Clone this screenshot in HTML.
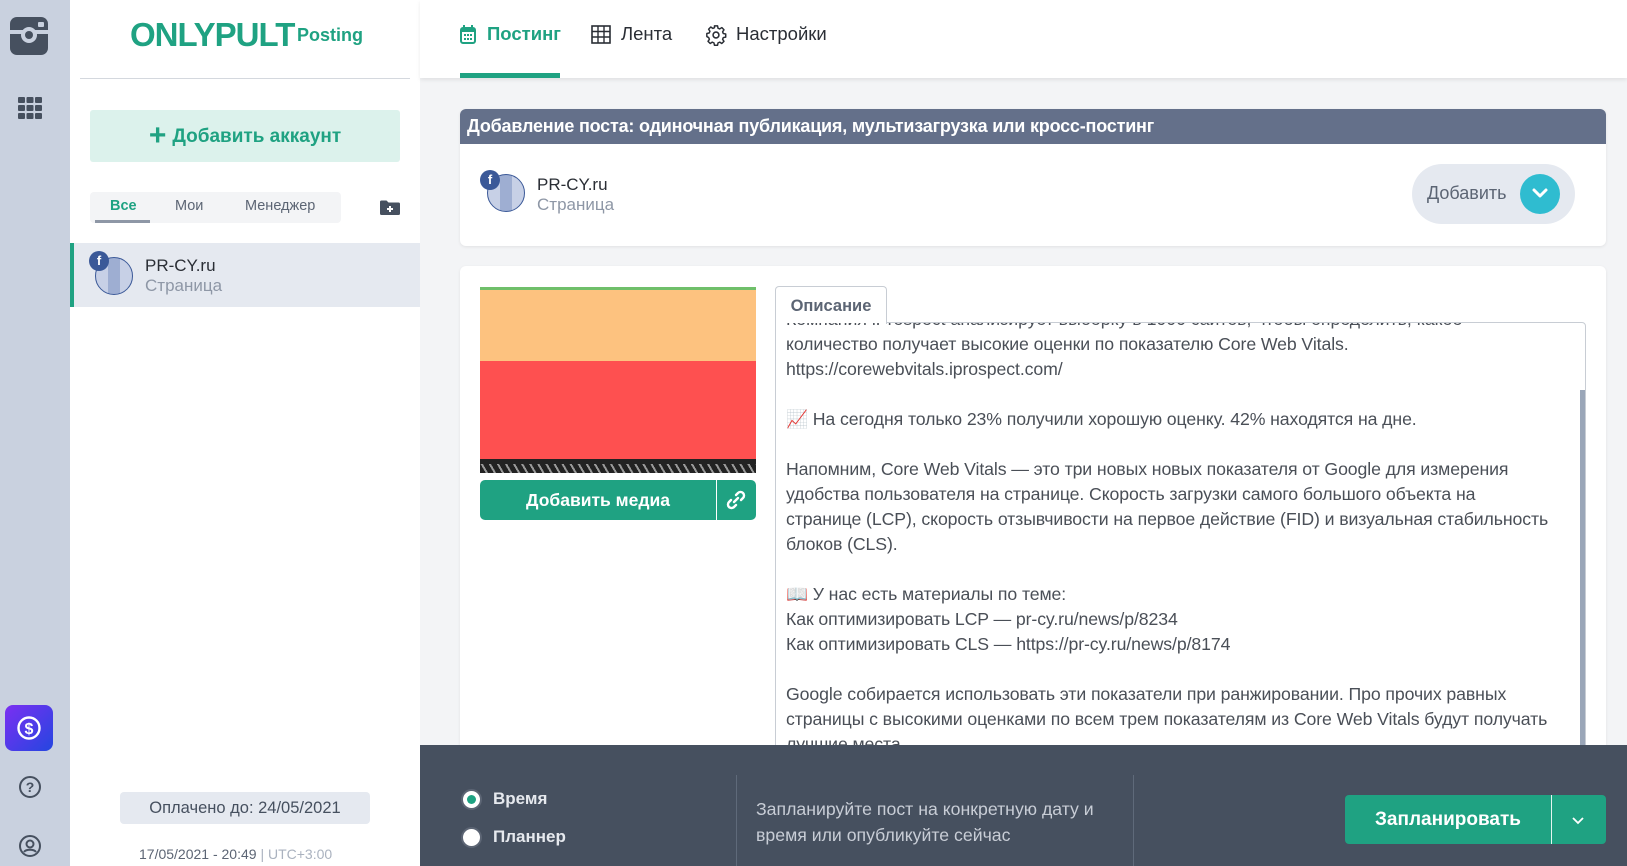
<!DOCTYPE html>
<html><head><meta charset="utf-8"><style>
*{box-sizing:border-box;margin:0;padding:0}
body{width:1627px;height:866px;overflow:hidden;font-family:"Liberation Sans",Arial,sans-serif;background:#f3f4f6;position:relative}
.abs{position:absolute}
.rail{left:0;top:0;width:70px;height:866px;background:#c9d1df}
.side{left:70px;top:0;width:350px;height:866px;background:#fff}
.nav{left:420px;top:0;width:1207px;height:78px;background:#fff;box-shadow:0 2px 4px rgba(0,0,0,.08)}
.card{background:#fff;border-radius:6px;box-shadow:0 1px 3px rgba(0,0,0,.08)}
.tl{position:absolute;left:786px;font-size:17.7px;color:#4a4f57;white-space:nowrap;line-height:20px;letter-spacing:-0.1px}
</style></head><body>
<div class="abs rail"></div>
<div class="abs" style="left:10px;top:17px;width:38px;height:38px;background:#46505f;border-radius:7px"></div>
<div class="abs" style="left:10px;top:30px;width:38px;height:4px;background:#c9d1df"></div>
<div class="abs" style="left:21px;top:27px;width:16px;height:16px;border-radius:50%;background:#c9d1df"></div>
<div class="abs" style="left:25px;top:31px;width:8px;height:8px;border-radius:50%;background:#46505f"></div>
<div class="abs" style="left:38px;top:22px;width:6px;height:5px;background:#c9d1df;border-radius:1px"></div>
<svg class="abs" style="left:18px;top:97px" width="24" height="22"><g fill="#46505f"><rect x="0" y="0" width="7" height="6" rx="1"/><rect x="8.5" y="0" width="7" height="6" rx="1"/><rect x="17" y="0" width="7" height="6" rx="1"/><rect x="0" y="8" width="7" height="6" rx="1"/><rect x="8.5" y="8" width="7" height="6" rx="1"/><rect x="17" y="8" width="7" height="6" rx="1"/><rect x="0" y="16" width="7" height="6" rx="1"/><rect x="8.5" y="16" width="7" height="6" rx="1"/><rect x="17" y="16" width="7" height="6" rx="1"/></g></svg>
<div class="abs" style="left:5px;top:705px;width:48px;height:46px;border-radius:8px;background:linear-gradient(135deg,#7b2ff2,#2446e0)"></div>
<svg class="abs" style="left:16px;top:715px" width="26" height="26"><circle cx="13" cy="13" r="10.5" fill="none" stroke="#fff" stroke-width="2.4"/><text x="13" y="19" font-size="16" font-weight="bold" fill="#fff" text-anchor="middle" font-family="Liberation Sans">$</text></svg>
<svg class="abs" style="left:18px;top:775px" width="24" height="24"><circle cx="12" cy="12" r="10" fill="none" stroke="#46505f" stroke-width="2"/><text x="12" y="17" font-size="14" font-weight="bold" fill="#46505f" text-anchor="middle" font-family="Liberation Sans">?</text></svg>
<svg class="abs" style="left:18px;top:834px" width="24" height="24"><circle cx="12" cy="12" r="10" fill="none" stroke="#46505f" stroke-width="2"/><circle cx="12" cy="10" r="3.5" fill="none" stroke="#46505f" stroke-width="2"/><path d="M6 18c2-3 10-3 12 0" fill="none" stroke="#46505f" stroke-width="2"/></svg>

<div class="abs side"></div>
<div class="abs" style="left:130px;top:16px;font-size:33px;font-weight:bold;color:#1fa282;letter-spacing:-1px">ONLYPULT</div>
<div class="abs" style="left:297px;top:25px;font-size:18px;font-weight:bold;color:#1fa282">Posting</div>
<div class="abs" style="left:80px;top:78px;width:330px;height:1px;background:#d4d8de"></div>
<div class="abs" style="left:90px;top:110px;width:310px;height:52px;background:#dcf2ec;border-radius:3px;color:#1fa282;font-weight:bold;font-size:19px;text-align:center;line-height:52px"><span style="font-size:30px;vertical-align:-3px;margin-right:6px">+</span>Добавить аккаунт</div>
<div class="abs" style="left:90px;top:192px;width:251px;height:31px;background:#f3f4f6;border-radius:4px"></div>
<div class="abs" style="left:95px;top:220px;width:55px;height:3px;background:#8e97a6"></div>
<div class="abs" style="left:110px;top:198px;font-size:14.5px;font-weight:bold;color:#1fa282">Все</div>
<div class="abs" style="left:175px;top:198px;font-size:14.5px;color:#5c6574">Мои</div>
<div class="abs" style="left:245px;top:198px;font-size:14.5px;color:#5c6574">Менеджер</div>
<svg class="abs" style="left:380px;top:200px" width="20" height="16"><path d="M0 2a1.5 1.5 0 0 1 1.5-1.5h5l2 2h10a1.5 1.5 0 0 1 1.5 1.5v9.5a1.5 1.5 0 0 1-1.5 1.5h-17A1.5 1.5 0 0 1 0 13.5z" fill="#46505f"/><path d="M10 6v6M7 9h6" stroke="#fff" stroke-width="2"/></svg>
<div class="abs" style="left:70px;top:243px;width:350px;height:64px;background:#e5e9f0;border-left:4px solid #1fa282"></div>
<div class="abs" style="left:95px;top:257px;width:38px;height:38px;border-radius:50%;border:1.5px solid #3b5998;background:repeating-linear-gradient(90deg,#c7d0e6 0 12px,#9eaed2 12px 24px)"></div>
<div class="abs" style="left:89px;top:251px;width:20px;height:20px;border-radius:50%;background:#3b5998;color:#fff;font-size:13px;font-weight:bold;text-align:center;line-height:20px">f</div>
<div class="abs" style="left:145px;top:256px;font-size:17px;color:#2a2e35">PR-CY.ru</div>
<div class="abs" style="left:145px;top:276px;font-size:17px;color:#8e97a6">Страница</div>
<div class="abs" style="left:120px;top:792px;width:250px;height:32px;background:#e5e9f0;border-radius:4px;text-align:center;line-height:32px;font-size:16.5px;color:#46505f">Оплачено до: 24/05/2021</div>
<div class="abs" style="left:139px;top:846px;font-size:14px;color:#5c6574">17/05/2021 - 20:49 <span style="color:#aab2bf">| UTC+3:00</span></div>

<div class="abs nav"></div>
<svg class="abs" style="left:460px;top:24px" width="16" height="20"><rect x="1" y="4" width="14" height="15" rx="2" fill="none" stroke="#1fa282" stroke-width="2"/><rect x="1" y="4" width="14" height="4" fill="#1fa282"/><path d="M4 1v4M12 1v4" stroke="#1fa282" stroke-width="2"/><g fill="#1fa282"><rect x="4" y="10" width="2" height="2"/><rect x="7" y="10" width="2" height="2"/><rect x="10" y="10" width="2" height="2"/><rect x="4" y="14" width="2" height="2"/><rect x="7" y="14" width="2" height="2"/><rect x="10" y="14" width="2" height="2"/></g></svg>
<div class="abs" style="left:487px;top:23px;font-size:18.5px;font-weight:bold;color:#1fa282">Постинг</div>
<div class="abs" style="left:460px;top:73px;width:100px;height:5px;background:#1fa282"></div>
<svg class="abs" style="left:591px;top:25px" width="20" height="19"><rect x="1" y="1" width="18" height="17" fill="none" stroke="#2a2e35" stroke-width="1.6"/><path d="M1 6.5h18M1 12h18M7 1v17M13 1v17" stroke="#2a2e35" stroke-width="1.4"/></svg>
<div class="abs" style="left:621px;top:23px;font-size:18.5px;color:#2a2e35">Лента</div>
<svg class="abs" style="left:705px;top:24px" width="22" height="22" viewBox="0 0 24 24"><circle cx="12" cy="12" r="3.2" fill="none" stroke="#2a2e35" stroke-width="1.7"/><path d="M10.3 2h3.4l.5 2.6 1.9.8 2.2-1.5 2.4 2.4-1.5 2.2.8 1.9 2.6.5v3.4l-2.6.5-.8 1.9 1.5 2.2-2.4 2.4-2.2-1.5-1.9.8-.5 2.6h-3.4l-.5-2.6-1.9-.8-2.2 1.5-2.4-2.4 1.5-2.2-.8-1.9L2 13.7v-3.4l2.6-.5.8-1.9-1.5-2.2 2.4-2.4 2.2 1.5 1.9-.8z" fill="none" stroke="#2a2e35" stroke-width="1.6" stroke-linejoin="round"/></svg>
<div class="abs" style="left:736px;top:23px;font-size:18.5px;color:#2a2e35">Настройки</div>

<div class="abs card" style="left:460px;top:109px;width:1146px;height:137px;overflow:hidden">
<div style="height:35px;background:#64708a;color:#fff;font-weight:bold;font-size:18px;line-height:35px;padding-left:7px;letter-spacing:-0.2px">Добавление поста: одиночная публикация, мультизагрузка или кросс-постинг</div>
</div>
<div class="abs" style="left:487px;top:174px;width:38px;height:38px;border-radius:50%;border:1.5px solid #3b5998;background:repeating-linear-gradient(90deg,#c7d0e6 0 12px,#9eaed2 12px 24px)"></div>
<div class="abs" style="left:480px;top:170px;width:20px;height:20px;border-radius:50%;background:#3b5998;color:#fff;font-size:13px;font-weight:bold;text-align:center;line-height:20px">f</div>
<div class="abs" style="left:537px;top:175px;font-size:17px;color:#2a2e35">PR-CY.ru</div>
<div class="abs" style="left:537px;top:195px;font-size:17px;color:#8e97a6">Страница</div>
<div class="abs" style="left:1412px;top:164px;width:163px;height:60px;border-radius:30px;background:#e5e9f0"></div>
<div class="abs" style="left:1427px;top:183px;font-size:18px;color:#5c6574">Добавить</div>
<div class="abs" style="left:1520px;top:174px;width:40px;height:40px;border-radius:50%;background:#2fbcd0"></div>
<svg class="abs" style="left:1531px;top:186px" width="18" height="14"><path d="M3 4l6 6 6-6" fill="none" stroke="#fff" stroke-width="3" stroke-linecap="round" stroke-linejoin="round"/></svg>

<div class="abs card" style="left:460px;top:266px;width:1146px;height:600px"></div>
<div class="abs" style="left:480px;top:287px;width:276px;height:186px;background:linear-gradient(180deg,#6fbf6a 0 3px,#fdc27f 3px 74px,#fe5050 74px 172px,#222 172px)"></div>
<div class="abs" style="left:480px;top:464px;width:276px;height:9px;background:repeating-linear-gradient(60deg,#222 0 5px,#999 5px 7px)"></div>
<div class="abs" style="left:480px;top:480px;width:276px;height:40px;background:#1fa282;border-radius:5px"></div>
<div class="abs" style="left:480px;top:480px;width:236px;height:40px;color:#fff;font-weight:bold;font-size:17.5px;text-align:center;line-height:40px">Добавить медиа</div>
<div class="abs" style="left:716px;top:480px;width:1px;height:40px;background:#fff"></div>
<svg class="abs" style="left:725px;top:489px" width="22" height="22"><g fill="none" stroke="#fff" stroke-width="2.4" stroke-linecap="round"><path d="M9 13l4-4"/><path d="M11 6l2-2a3 3 0 0 1 5 5l-2 2"/><path d="M11 16l-2 2a3 3 0 0 1-5-5l2-2"/></g></svg>

<div class="abs" style="left:775px;top:322px;width:811px;height:430px;border:1px solid #c8cdd4;border-radius:0 4px 0 0;background:#fff;overflow:hidden"></div>
<div class="abs" style="left:1580px;top:390px;width:5px;height:360px;background:#9aa6b8"></div>
<div class="abs" style="left:775px;top:286px;width:112px;height:38px;border:1px solid #c8cdd4;border-bottom:none;border-radius:4px 4px 0 0;background:#fff;text-align:center;line-height:38px;font-weight:bold;font-size:16.5px;color:#5c6574">Описание</div>
<div class="abs" style="left:776px;top:323px;width:806px;height:426px;overflow:hidden">
<div style="position:absolute;left:10px;top:-14px;font-size:17.7px;color:#4a4f57;white-space:nowrap">Компания iProspect анализирует выборку в 1000 сайтов, чтобы определить, какое</div>
</div>
<div class="tl" style="top:334px">количество получает высокие оценки по показателю Core Web Vitals.</div>
<div class="tl" style="top:359px">https://corewebvitals.iprospect.com/</div>
<div class="tl" style="top:409px"><span style="color:#e02424">📈</span> На сегодня только 23% получили хорошую оценку. 42% находятся на дне.</div>
<div class="tl" style="top:459px">Напомним, Core Web Vitals — это три новых новых показателя от Google для измерения</div>
<div class="tl" style="top:484px">удобства пользователя на странице. Скорость загрузки самого большого объекта на</div>
<div class="tl" style="top:509px">странице (LCP), скорость отзывчивости на первое действие (FID) и визуальная стабильность</div>
<div class="tl" style="top:534px">блоков (CLS).</div>
<div class="tl" style="top:584px">📖 У нас есть материалы по теме:</div>
<div class="tl" style="top:609px">Как оптимизировать LCP — pr-cy.ru/news/p/8234</div>
<div class="tl" style="top:634px">Как оптимизировать CLS — https://pr-cy.ru/news/p/8174</div>
<div class="tl" style="top:684px">Google собирается использовать эти показатели при ранжировании. Про прочих равных</div>
<div class="tl" style="top:709px">страницы с высокими оценками по всем трем показателям из Core Web Vitals будут получать</div>
<div class="tl" style="top:734px">лучшие места.</div>

<div class="abs" style="left:420px;top:745px;width:1207px;height:121px;background:#46505f"></div>
<div class="abs" style="left:461px;top:789px;width:21px;height:21px;border-radius:50%;background:#fff;border:2px solid #5c6574"></div>
<div class="abs" style="left:467px;top:795px;width:9px;height:9px;border-radius:50%;background:#1fa282"></div>
<div class="abs" style="left:493px;top:789px;font-size:17px;font-weight:bold;color:#e6e9ee">Время</div>
<div class="abs" style="left:461px;top:827px;width:21px;height:21px;border-radius:50%;background:#fff;border:2px solid #5c6574"></div>
<div class="abs" style="left:493px;top:827px;font-size:17px;font-weight:bold;color:#e6e9ee">Планнер</div>
<div class="abs" style="left:736px;top:775px;width:1px;height:91px;background:#5f6a7a"></div>
<div class="abs" style="left:1133px;top:775px;width:1px;height:91px;background:#5f6a7a"></div>
<div class="abs" style="left:756px;top:796px;font-size:17.7px;color:#c8cdd6;line-height:26px">Запланируйте пост на конкретную дату и<br>время или опубликуйте сейчас</div>
<div class="abs" style="left:1345px;top:795px;width:261px;height:49px;background:#1fa282;border-radius:4px"></div>
<div class="abs" style="left:1345px;top:795px;width:206px;height:49px;color:#fff;font-weight:bold;font-size:19px;text-align:center;line-height:49px">Запланировать</div>
<div class="abs" style="left:1551px;top:795px;width:1px;height:49px;background:#e6f5f0"></div>
<svg class="abs" style="left:1570px;top:815px" width="16" height="12"><path d="M3 3l5 5 5-5" fill="none" stroke="#fff" stroke-width="1.8"/></svg>
</body></html>
